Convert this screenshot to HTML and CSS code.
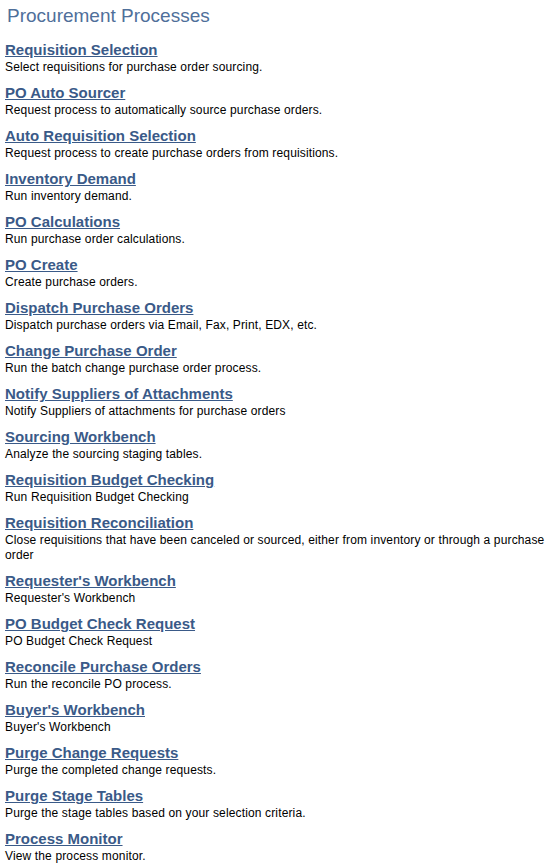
FILE: index.html
```html
<!DOCTYPE html>
<html lang="en">
<head>
    <meta charset="UTF-8">
    <meta name="viewport" content="width=device-width, initial-scale=1.0">
    <title>Procurement Processes</title>
    <link rel="stylesheet" href="styles.css">
</head>
<body>
    <div class="menu-page">
        <h1>Procurement Processes</h1>

        <ul class="process-list">
            <li>
                <a href="#">Requisition Selection</a>
                <p>Select requisitions for purchase order sourcing.</p>
            </li>
            <li>
                <a href="#">PO Auto Sourcer</a>
                <p>Request process to automatically source purchase orders.</p>
            </li>
            <li>
                <a href="#">Auto Requisition Selection</a>
                <p>Request process to create purchase orders from requisitions.</p>
            </li>
            <li>
                <a href="#">Inventory Demand</a>
                <p>Run inventory demand.</p>
            </li>
            <li>
                <a href="#">PO Calculations</a>
                <p>Run purchase order calculations.</p>
            </li>
            <li>
                <a href="#">PO Create</a>
                <p>Create purchase orders.</p>
            </li>
            <li>
                <a href="#">Dispatch Purchase Orders</a>
                <p>Dispatch purchase orders via Email, Fax, Print, EDX, etc.</p>
            </li>
            <li>
                <a href="#">Change Purchase Order</a>
                <p>Run the batch change purchase order process.</p>
            </li>
            <li>
                <a href="#">Notify Suppliers of Attachments</a>
                <p>Notify Suppliers of attachments for purchase orders</p>
            </li>
            <li>
                <a href="#">Sourcing Workbench</a>
                <p>Analyze the sourcing staging tables.</p>
            </li>
            <li>
                <a href="#">Requisition Budget Checking</a>
                <p>Run Requisition Budget Checking</p>
            </li>
            <li>
                <a href="#">Requisition Reconciliation</a>
                <p>Close requisitions that have been canceled or sourced, either from inventory or through a purchase order</p>
            </li>
            <li>
                <a href="#">Requester's Workbench</a>
                <p>Requester's Workbench</p>
            </li>
            <li>
                <a href="#">PO Budget Check Request</a>
                <p>PO Budget Check Request</p>
            </li>
            <li>
                <a href="#">Reconcile Purchase Orders</a>
                <p>Run the reconcile PO process.</p>
            </li>
            <li>
                <a href="#">Buyer's Workbench</a>
                <p>Buyer's Workbench</p>
            </li>
            <li>
                <a href="#">Purge Change Requests</a>
                <p>Purge the completed change requests.</p>
            </li>
            <li>
                <a href="#">Purge Stage Tables</a>
                <p>Purge the stage tables based on your selection criteria.</p>
            </li>
            <li>
                <a href="#">Process Monitor</a>
                <p>View the process monitor.</p>
            </li>
        </ul>
    </div>
</body>
</html>
```

FILE: styles.css
```css
body {
    font-family: 'Liberation Sans', Arial, sans-serif;
    background-color: #fff;
    color: #000;
    margin: 0;
    padding: 0;
}

.menu-page {
    padding: 5px 0 0 5px;
}

h1 {
    color: #4f6f9a;
    font-size: 19px;
    font-weight: normal;
    line-height: 22px;
    margin: 0 0 14px 2px;
}

.process-list {
    list-style: none;
    margin: 0;
    padding: 0;
}

.process-list li {
    margin-bottom: 9px;
}

.process-list a {
    display: block;
    width: fit-content;
    color: #3a5a88;
    font-size: 15px;
    font-weight: bold;
    line-height: 17px;
    text-decoration: underline;
}

.process-list p {
    font-size: 12px;
    line-height: 15px;
    letter-spacing: 0.14px;
    margin: 2px 0 0 0;
}
```
